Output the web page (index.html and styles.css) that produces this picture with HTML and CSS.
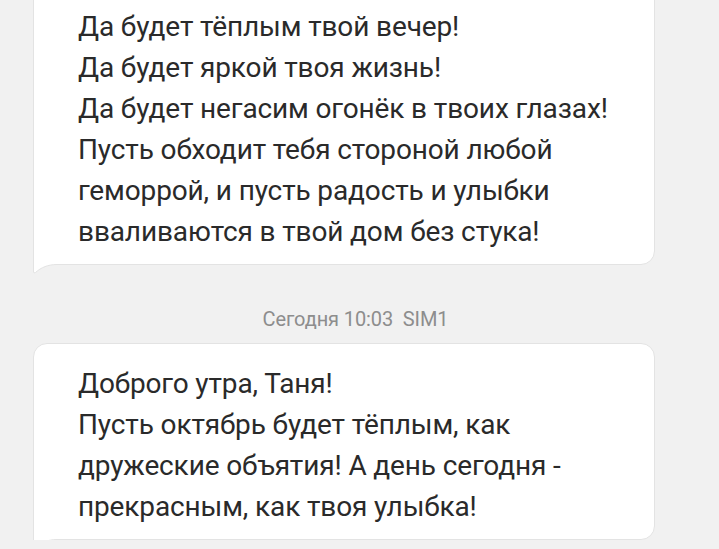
FILE: index.html
```html
<!DOCTYPE html>
<html lang="ru">

<head>
    <meta charset="UTF-8">
    <meta name="viewport" content="width=device-width, initial-scale=1.0">
    <title>Сообщения</title>
    <link rel="stylesheet" href="styles.css">
</head>

<body>
    <div class="thread">
        <div class="bubble">
            <p class="text">Да будет тёплым твой вечер!<br>Да будет яркой твоя жизнь!<br>Да будет негасим огонёк в твоих глазах!<br>Пусть обходит тебя стороной любой<br>геморрой, и пусть радость и улыбки<br>вваливаются в твой дом без стука!</p>
            <svg class="tail" width="24" height="10" viewBox="0 0 24 10">
                <path d="M1 0 H24 V0.5 C15 0.5 8 3.5 2.5 8.5 Q0.5 9.5 0.5 8 V0 Z" fill="#fff" />
                <path d="M0.5 0 V8 Q0.5 9.5 2.5 8.5 C8 3.5 15 0.5 24 0.5" fill="none" stroke="#e3e3e3" />
            </svg>
        </div>

        <div class="stamp">Сегодня 10:03&nbsp;&nbsp;SIM1</div>

        <div class="bubble">
            <p class="text">Доброго утра, Таня!<br>Пусть октябрь будет тёплым, как<br>дружеские объятия! А день сегодня -<br>прекрасным, как твоя улыбка!</p>
            <svg class="tail" width="24" height="10" viewBox="0 0 24 10">
                <path d="M1 0 H24 V0.5 C15 0.5 8 3.5 2.5 8.5 Q0.5 9.5 0.5 8 V0 Z" fill="#fff" />
                <path d="M0.5 0 V8 Q0.5 9.5 2.5 8.5 C8 3.5 15 0.5 24 0.5" fill="none" stroke="#e3e3e3" />
            </svg>
        </div>
    </div>
</body>

</html>
```

FILE: styles.css
```css
body {
    margin: 0;
    background: #f1f1f1;
    font-family: Roboto, "Noto Sans", sans-serif;
    overflow: hidden;
}

.thread {
    margin-top: -14px;
}

.bubble {
    position: relative;
    box-sizing: border-box;
    width: 622px;
    margin-left: 33px;
    padding: 19px 44px 12px;
    background: #fff;
    border: 1px solid #e3e3e3;
    border-radius: 14px 14px 14px 0;
}

.text {
    margin: 0;
    font-size: 28px;
    line-height: 41px;
    letter-spacing: -0.13px;
    color: #2a2a2a;
    white-space: nowrap;
}

.tail {
    position: absolute;
    left: -1px;
    bottom: -10px;
    display: block;
}

.stamp {
    padding: 42px 8px 12px 0;
    text-align: center;
    font-size: 20px;
    line-height: 24px;
    letter-spacing: -0.1px;
    color: #8d8d8d;
}
```
